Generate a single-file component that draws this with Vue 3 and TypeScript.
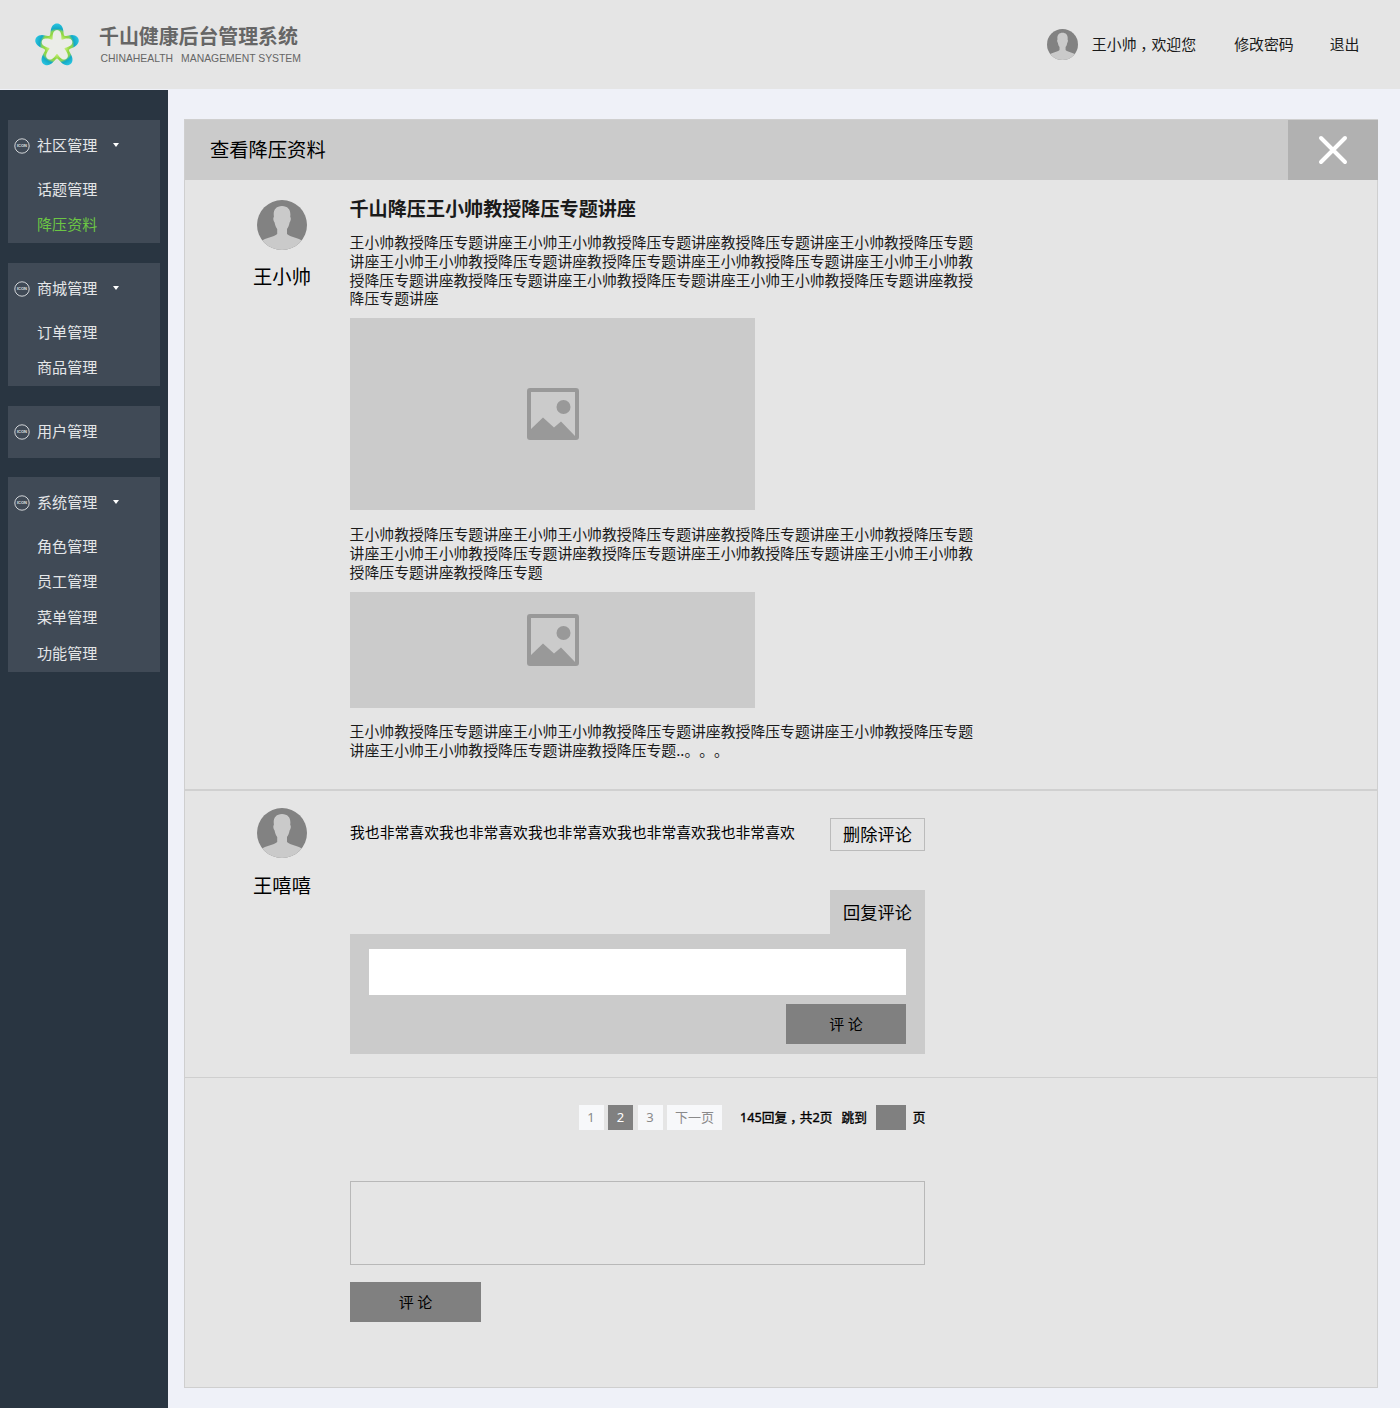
<script setup lang="ts">
interface MenuGroup {
  title: string
  items: string[]
}

const menu: MenuGroup[] = [
  { title: '社区管理', items: ['话题管理', '降压资料'] },
  { title: '商城管理', items: ['订单管理', '商品管理'] },
  { title: '用户管理', items: [] },
  { title: '系统管理', items: ['角色管理', '员工管理', '菜单管理', '功能管理'] },
]
const activeItem = '降压资料'

const phrase = '王小帅教授降压专题讲座王小帅王小帅教授降压专题讲座教授降压专题讲座'
const trimmed = phrase.slice(0, -2)
const intro = phrase.repeat(4)
const middle = phrase.repeat(2) + trimmed
const ending = phrase + trimmed + '..。。。'
const comment = '我也非常喜欢'.repeat(5)

// Five-lobed outline in polar form; the second harmonic rounds off the lobe tips
function starPath(base: number, swing: number, round: number): string {
  const points: string[] = []
  for (let deg = 0; deg < 360; deg += 3) {
    const t = (deg * Math.PI) / 180
    const r = base + swing * Math.cos(5 * t) - round * Math.cos(10 * t)
    points.push(`${(r * Math.sin(t)).toFixed(2)} ${(-r * Math.cos(t)).toFixed(2)}`)
  }
  return `M${points.join('L')}Z`
}
const outerStar = starPath(18.1, 5, 0.5)
const innerStar = starPath(12.4, 4, 0.5)
</script>

<template>
  <div class="page">
    <svg class="defs" width="0" height="0" aria-hidden="true">
      <clipPath id="round"><circle cx="25" cy="25" r="25" /></clipPath>
      <symbol id="avatar" viewBox="0 0 50 50">
        <circle cx="25" cy="25" r="25" fill="#828282" />
        <path
          clip-path="url(#round)"
          fill="#cacaca"
          d="M25 6C19.500 6 16.600 9.500 16.700 14.500L16.900 17C15.900 17.600 16.300 21 17.600 22.500C18.100 25.500 19 27.600 20.200 29V34C17 37 8 38 4.500 41V50H45.500V41C42 38 33 37 30 34V29C31.200 27.600 32.100 25.500 32.600 22.500C33.900 21 34.200 17.600 33.200 17L33.400 14.500C33.500 9.500 30.500 6 25 6Z"
        />
      </symbol>
      <symbol id="picture" viewBox="0 0 52 52">
        <path
          fill="#999"
          fill-rule="evenodd"
          d="M3 0H49Q52 0 52 3V49Q52 52 49 52H3Q0 52 0 49V3Q0 0 3 0ZM4 4V41L16 29.500L27 39.500L34 33.500L48 48V4Z"
        />
        <circle cx="36.500" cy="19" r="7" fill="#999" />
      </symbol>
    </svg>

    <header class="top">
      <svg class="logo" width="46" height="46" viewBox="-23 -23 46 46">
        <defs>
          <radialGradient id="ring" gradientUnits="userSpaceOnUse" cx="0" cy="0" r="23">
            <stop offset="0.36" stop-color="#c4ee78" />
            <stop offset="0.56" stop-color="#8fd63f" />
            <stop offset="0.66" stop-color="#86d45a" />
            <stop offset="0.76" stop-color="#14a9c6" />
            <stop offset="1" stop-color="#2cc8e4" />
          </radialGradient>
        </defs>
        <path :d="outerStar" fill="url(#ring)" />
        <path :d="innerStar" fill="#ebede8" />
      </svg>
      <div class="brand">
        <div class="brand-cn">千山健康后台管理系统</div>
        <div class="brand-en"><span>CHINAHEALTH</span><span>MANAGEMENT SYSTEM</span></div>
      </div>
      <nav class="account">
        <svg class="face" width="31" height="31"><use href="#avatar" /></svg>
        <span class="hello">王小帅<span class="comma">，</span>欢迎您</span>
        <span class="pwd">修改密码</span>
        <span>退出</span>
      </nav>
    </header>

    <div class="body">
      <aside class="side">
        <section v-for="g in menu" :key="g.title" class="group">
          <div class="group-head">
            <svg width="16" height="16" viewBox="0 0 16 16">
              <circle cx="8" cy="8" r="7.200" fill="none" stroke="#e2e4e6" stroke-width="0.900" />
              <text x="8" y="9.400" text-anchor="middle" class="icon-label">ICON</text>
            </svg>
            <span>{{ g.title }}</span>
            <i v-if="g.items.length" class="caret"></i>
          </div>
          <div v-for="item in g.items" :key="item" class="item" :class="{ active: item === activeItem }">
            {{ item }}
          </div>
        </section>
      </aside>

      <main class="panel">
        <div class="panel-head">
          <h1>查看降压资料</h1>
          <div class="close">
            <svg width="30" height="30" viewBox="0 0 30 30">
              <path d="M3 3L27 27M27 3L3 27" stroke="#fff" stroke-width="4" stroke-linecap="round" />
            </svg>
          </div>
        </div>

        <section class="row article">
          <div class="author">
            <svg width="50" height="50"><use href="#avatar" /></svg>
            <span>王小帅</span>
          </div>
          <div class="content">
            <h2>千山降压王小帅教授降压专题讲座</h2>
            <p>{{ intro }}</p>
            <div class="figure tall"><svg width="52" height="52"><use href="#picture" /></svg></div>
            <p>{{ middle }}</p>
            <div class="figure short"><svg width="52" height="52"><use href="#picture" /></svg></div>
            <p>{{ ending }}</p>
          </div>
        </section>

        <section class="row reply">
          <div class="author">
            <svg width="50" height="50"><use href="#avatar" /></svg>
            <span>王嘻嘻</span>
          </div>
          <div class="content">
            <div class="comment-line">
              <span class="comment">{{ comment }}</span>
              <button class="delete">删除评论</button>
            </div>
            <div class="tab">回复评论</div>
            <div class="reply-box">
              <div class="reply-input"></div>
              <button class="send">评 论</button>
            </div>
          </div>
        </section>

        <section class="footer">
          <div class="pager">
            <span class="pg">1</span>
            <span class="pg current">2</span>
            <span class="pg">3</span>
            <span class="pg next">下一页</span>
            <span class="total">145回复<span class="comma">，</span>共2页</span>
            <span class="jump">跳到</span>
            <span class="jump-box"></span>
            <span class="unit">页</span>
          </div>
          <div class="textarea"></div>
          <button class="send wide">评 论</button>
        </section>
      </main>
    </div>
  </div>
</template>

<style>
body {
  margin: 0;
  background: #fff;
}
</style>

<style scoped>
.page {
  width: 1400px;
  height: 1408px;
  display: flex;
  flex-direction: column;
  background: #eff1f8;
  font-family: 'Noto Sans CJK SC', sans-serif;
  text-spacing-trim: space-all;
  color: #000;
}
.defs {
  position: absolute;
}
svg {
  display: block;
  flex: none;
}
h1,
h2,
p {
  margin: 0;
  font-weight: 400;
}
button {
  border: 0;
  padding: 0;
  font-family: inherit;
  color: #000;
  box-sizing: border-box;
}
/* half-width comma centred in a full-width slot */
.comma {
  margin: 0 0.25em;
  font-feature-settings: 'halt';
}
.top {
  height: 89px;
  flex: none;
  box-sizing: border-box;
  display: flex;
  background: #e5e5e5;
}
.logo {
  margin: 23px 0 0 34px;
}
.brand {
  margin-left: 19px;
  padding-top: 22px;
  color: #666;
}
.brand-cn {
  font-size: 19.9px;
  line-height: 28px;
  font-weight: 700;
  white-space: nowrap;
}
.brand-en {
  display: flex;
  gap: 8px;
  margin-left: 1.5px;
  font: 10.4px/18px 'Liberation Sans', sans-serif;
}
.account {
  margin-left: auto;
  height: 89px;
  padding-right: 40.5px;
  display: flex;
  align-items: center;
  font-size: 14.9px;
  color: #1a1a1a;
  white-space: nowrap;
}
.account span {
  padding-bottom: 2px;
}
.account .comma {
  padding: 0;
}
.account .hello {
  margin-left: 13.5px;
}
.account .pwd {
  margin: 0 36px 0 38px;
}
.body {
  flex: 1;
  display: flex;
  align-items: flex-start;
}
.side {
  width: 168px;
  align-self: stretch;
  margin-top: 1px;
  padding: 30px 8px 0;
  box-sizing: border-box;
  background: #293541;
  display: flex;
  flex-direction: column;
  gap: 20px;
}
.group {
  background: #404a56;
  color: #e4e6e8;
  font-size: 15.1px;
}
.group:last-child {
  margin-top: -0.5px;
}
.group-head {
  height: 51.5px;
  padding-left: 6px;
  display: flex;
  align-items: center;
}
.group-head span {
  margin-left: 7px;
  padding-bottom: 3.5px;
}
.icon-label {
  font: bold 4px 'Liberation Sans', sans-serif;
  fill: #e2e4e6;
}
.caret {
  margin: 0 0 1px 15.5px;
  border: 3.5px solid transparent;
  border-top: 4px solid #fff;
  border-bottom: 0;
}
.item {
  height: 35.75px;
  box-sizing: border-box;
  line-height: 33.75px;
  padding-left: 29px;
}
.item.active {
  color: #6cc644;
}
.panel {
  width: 1194px;
  height: 1269px;
  box-sizing: border-box;
  margin: 30px 0 0 16px;
  border: 1px solid #cfcfcf;
  background: #e5e5e5;
}
.panel-head {
  height: 60px;
  display: flex;
  align-items: center;
  justify-content: space-between;
  background: #cbcbcb;
}
h1 {
  margin-left: 25px;
  padding-bottom: 2px;
  font-size: 19.3px;
}
.close {
  width: 90px;
  height: 60px;
  margin-right: -1px;
  display: flex;
  align-items: center;
  justify-content: center;
  background: #b1b1b1;
}
.row {
  display: flex;
  box-sizing: border-box;
}
.author {
  width: 120px;
  margin: 20px 8px 0 37px;
  display: flex;
  flex-direction: column;
  align-items: center;
  gap: 12px;
  font-size: 19.3px;
  line-height: 28px;
}
.article {
  height: 611px;
  border-bottom: 2px solid #d0d0d0;
  color: #1a1a1a;
}
.article .author {
  color: #000;
}
.article .content {
  width: 626px;
  padding-top: 14px;
}
h2 {
  font-size: 19.1px;
  line-height: 28px;
  font-weight: 700;
  margin-left: -0.5px;
}
p {
  margin-left: -0.4px;
  font-size: 14.85px;
  line-height: 18.6px;
}
h2 + p {
  margin-top: 11.4px;
}
.figure {
  width: 405px;
  box-sizing: border-box;
  display: flex;
  justify-content: center;
  background: #cbcbcb;
}
.tall {
  height: 192px;
  margin: 9.8px 0 15.8px;
  padding-top: 70px;
}
.short {
  height: 116px;
  margin: 10.4px 0 14.8px;
  padding-top: 22px;
}
.reply {
  height: 287px;
  border-bottom: 1px solid #cfcfcf;
}
.reply .author {
  margin-top: 17px;
  gap: 13px;
}
.reply .content {
  width: 575px;
  padding-top: 27px;
  display: flex;
  flex-direction: column;
}
.comment-line {
  display: flex;
  justify-content: space-between;
}
.comment {
  font-size: 14.83px;
  line-height: 27px;
}
.delete {
  width: 95px;
  height: 33px;
  padding-bottom: 2px;
  border: 1px solid #bbb;
  background: none;
  font-size: 17.2px;
  line-height: 29px;
}
.tab {
  align-self: flex-end;
  width: 95px;
  height: 44px;
  margin-top: 39px;
  line-height: 43px;
  text-align: center;
  font-size: 17.2px;
  background: #cbcbcb;
}
.reply-box {
  height: 120px;
  box-sizing: border-box;
  padding: 15px 19px 0;
  display: flex;
  flex-direction: column;
  align-items: flex-end;
  gap: 9px;
  background: #cbcbcb;
}
.reply-input {
  width: 537px;
  height: 46px;
  background: #fff;
}
.send {
  width: 120px;
  height: 40px;
  padding-bottom: 2px;
  display: block;
  background: #808080;
  font-size: 15px;
}
.footer {
  width: 576px;
  margin-left: 165px;
  padding-top: 27px;
}
.pager {
  display: flex;
  height: 25px;
  line-height: 25px;
  padding-left: 228.5px;
  font-size: 12.7px;
  font-family: 'Noto Sans', 'Noto Sans CJK SC', sans-serif;
  white-space: nowrap;
}
.pg {
  width: 25px;
  margin-right: 4.5px;
  text-align: center;
  background: #f7f8fa;
  color: #8a8a8a;
  font-size: 13px;
}
.current {
  background: #808080;
  color: #fff;
}
.next {
  width: 55px;
  margin-right: 18px;
}
.total,
.jump,
.unit {
  -webkit-text-stroke: 0.35px #000;
}
.total .comma {
  font-family: 'Noto Sans CJK SC', sans-serif;
  line-height: 1;
}
.jump {
  margin-left: 9px;
}
.jump-box {
  width: 30px;
  margin: 0 7px 0 9px;
  background: #808080;
}
.textarea {
  width: 575px;
  height: 84px;
  margin-top: 51px;
  box-sizing: border-box;
  border: 1px solid #b8b8b8;
}
.wide {
  width: 131px;
  margin-top: 17px;
}
</style>
